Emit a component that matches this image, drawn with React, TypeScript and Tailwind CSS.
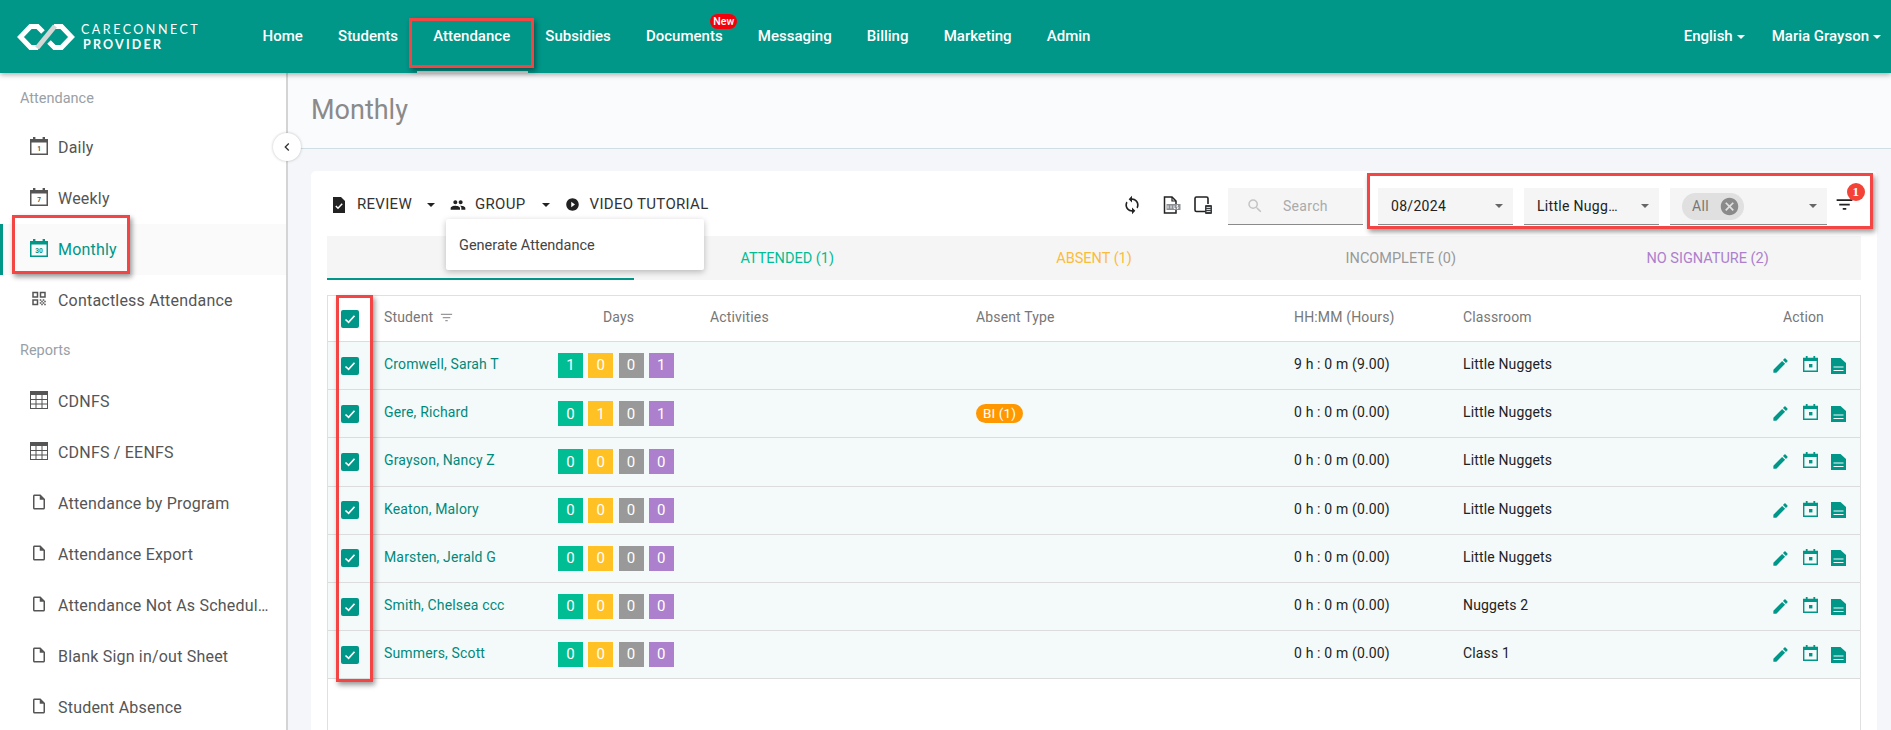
import React from 'react';
import {
    MdEdit, MdFilterList, MdCancel, MdPeople, MdPlayCircleFilled, MdSync, MdSearch,
    MdQrCode, MdOutlineInsertDriveFile, MdChevronLeft,
} from 'react-icons/md';

const roboto = "font-['Roboto',sans-serif]";

const navItems = ['Home', 'Students', 'Attendance', 'Subsidies', 'Documents', 'Messaging', 'Billing', 'Marketing', 'Admin'];

const students = [
    { name: 'Cromwell, Sarah T', days: [1, 0, 0, 1], hours: '9 h : 0 m (9.00)', room: 'Little Nuggets' },
    { name: 'Gere, Richard', days: [0, 1, 0, 1], hours: '0 h : 0 m (0.00)', room: 'Little Nuggets', absent: 'BI (1)' },
    { name: 'Grayson, Nancy Z', days: [0, 0, 0, 0], hours: '0 h : 0 m (0.00)', room: 'Little Nuggets' },
    { name: 'Keaton, Malory', days: [0, 0, 0, 0], hours: '0 h : 0 m (0.00)', room: 'Little Nuggets' },
    { name: 'Marsten, Jerald G', days: [0, 0, 0, 0], hours: '0 h : 0 m (0.00)', room: 'Little Nuggets' },
    { name: 'Smith, Chelsea ccc', days: [0, 0, 0, 0], hours: '0 h : 0 m (0.00)', room: 'Nuggets 2' },
    { name: 'Summers, Scott', days: [0, 0, 0, 0], hours: '0 h : 0 m (0.00)', room: 'Class 1' },
];

const dayColors = ['bg-[#00bd94]', 'bg-[#ffc124]', 'bg-[#999999]', 'bg-[#ac80cc]'];

const tabs = [
    { label: '', color: '' },
    { label: 'ATTENDED (1)', color: 'text-[#00bd94]' },
    { label: 'ABSENT (1)', color: 'text-[#fbbc3a]' },
    { label: 'INCOMPLETE (0)', color: 'text-[#999999]' },
    { label: 'NO SIGNATURE (2)', color: 'text-[#ac80cc]' },
];

const Logo = () => (
    <svg width="58" height="26" viewBox="0 0 58 26" fill="none">
        <path d="M26 8 L20.5 2.5 H13.5 L3.5 13 L13.5 23.5 H21" stroke="#ffffff" strokeWidth="5" />
        <path d="M32 18 L37.5 23.5 H44.5 L54.5 13 L44.5 2.5 H37" stroke="#ffffff" strokeWidth="5" />
        <path d="M20 24 L38 2" stroke="#d3d8d6" strokeWidth="5" />
    </svg>
);

const CalendarIcon: React.FC<{ label: string; active?: boolean }> = ({ label, active }) => {
    const color = active ? '#009688' : '#555555';
    return (
        <svg width="18" height="18" viewBox="0 0 18 18">
            <rect x="0.75" y="2.75" width="16.5" height="14.5" fill="none" stroke={color} strokeWidth="1.5" />
            <rect x="0" y="2" width="18" height="3.5" fill={color} />
            <rect x="3" y="0" width="2.4" height="3" fill={color} />
            <rect x="12.6" y="0" width="2.4" height="3" fill={color} />
            <text x="9" y="14" textAnchor="middle" fontSize="6.5" fontWeight="700" fontFamily="Roboto, sans-serif" fill={color}>{label}</text>
        </svg>
    );
};

const TableIcon = () => (
    <svg width="18" height="18" viewBox="0 0 18 18" fill="none" stroke="#555555" strokeWidth="1">
        <rect x="0.5" y="0.5" width="17" height="17" />
        <rect x="0" y="0" width="18" height="4" fill="#555555" stroke="none" />
        <path d="M0 8.5H18M0 13H18M6 4V18M12 4V18" />
    </svg>
);

const ReviewIcon = () => (
    <svg width="12" height="16" viewBox="0 0 12 16">
        <path d="M0 0H8L12 4V16H0Z" fill="#222222" />
        <path d="M2.8 9 L5 11.2 L9.2 6.8" fill="none" stroke="#ffffff" strokeWidth="1.5" />
    </svg>
);

const XlsIcon = () => (
    <svg width="18" height="18" viewBox="0 0 18 18" fill="none">
        <path d="M1.5 1H9L13 5V17H1.5Z" stroke="#222222" strokeWidth="1.5" />
        <path d="M9 1V5H13" stroke="#222222" strokeWidth="1.2" />
        <rect x="3.5" y="8" width="14" height="6" fill="#8b8f94" />
        <path d="M5 9.5V12.5M8 9.5V12.5M11 9.5V12.5H12.5M15 9.5H14V11H15V12.5H14" stroke="#ffffff" strokeWidth="0.9" />
    </svg>
);

const TabletIcon = () => (
    <svg width="18" height="18" viewBox="0 0 18 18" fill="none">
        <path d="M11 15.5H2.5C1.7 15.5 1 14.8 1 14V2.5C1 1.7 1.7 1 2.5 1H12.5C13.3 1 14 1.7 14 2.5V8" stroke="#222222" strokeWidth="1.6" />
        <rect x="11" y="9" width="7" height="9" rx="1" fill="#3a3d40" />
        <path d="M12.5 11.5H16.5M12.5 13.5H16.5M12.5 15.5H16.5" stroke="#ffffff" strokeWidth="0.8" />
    </svg>
);

const EventIcon = () => (
    <svg width="15" height="16" viewBox="0 0 15 16" className="mb-[3px]">
        <path d="M0.7 2.5H14.3V15.3H0.7Z" fill="none" stroke="#009688" strokeWidth="1.4" />
        <rect x="0" y="2" width="15" height="3" fill="#009688" />
        <rect x="2.8" y="0" width="1.8" height="3" fill="#009688" />
        <rect x="10.4" y="0" width="1.8" height="3" fill="#009688" />
        <rect x="6" y="8" width="3.4" height="3.4" fill="#009688" />
    </svg>
);

const SheetIcon = () => (
    <svg width="15" height="16" viewBox="0 0 15 16">
        <path d="M0 0H9.5L15 5V16H0Z" fill="#009688" />
        <path d="M2.5 9H12.5M2.5 12.5H12.5" stroke="#f4fafa" strokeWidth="1.2" />
    </svg>
);

const Checkbox = () => (
    <span className="w-[18px] h-[18px] rounded-[2px] bg-[#009688] flex items-center justify-center">
        <svg width="12" height="12" viewBox="0 0 12 12" fill="none">
            <path d="M1.5 6.5 L4.6 9.4 L10.5 2.8" stroke="#ffffff" strokeWidth="1.7" />
        </svg>
    </span>
);

const Caret = ({ className = '' }: { className?: string }) => (
    <span className={`w-0 h-0 border-x-[4px] border-x-transparent border-t-[4px] ${className}`} />
);

const SelectBox: React.FC<{ width: string; children: React.ReactNode }> = ({ width, children }) => (
    <div className={`${width} h-[37px] bg-[#f5f5f5] border-b border-[#8a8a8a] flex items-center justify-between pl-[13px] pr-[10px] text-[14px] text-[#222222]`}>
        {children}
        <Caret className="border-t-[#666666]" />
    </div>
);

const SideItem: React.FC<{ icon: React.ReactNode; label: string; active?: boolean }> = ({ icon, label, active }) => (
    <div className={`h-[51px] flex items-center pl-[30px] text-[16px] relative ${active ? 'bg-[#fafafa] text-[#009688]' : 'text-[#555555]'}`}>
        {active && <span className="absolute left-0 top-0 bottom-0 w-[3px] bg-[#009688]" />}
        <span className="w-[18px] flex justify-center mr-[10px] mb-[4px]">{icon}</span>
        <span className="truncate pr-[17px] tracking-[0.2px]">{label}</span>
    </div>
);

const DocIcon = () => <MdOutlineInsertDriveFile size={18} className="text-[#555555]" />;

const RedBox = ({ className }: { className: string }) => (
    <div className={`absolute border-[3px] border-[#f44545] shadow-[2px_3px_5px_rgba(0,0,0,0.4)] pointer-events-none z-30 ${className}`} />
);

export default function App() {
    return (
        <div className={`relative h-[730px] overflow-hidden flex flex-col bg-[#f5f6fa] ${roboto}`}>
            <header className="h-[73px] shrink-0 bg-[#009688] flex items-center text-white shadow-[0_2px_5px_rgba(0,0,0,0.3)] relative z-20">
                <div className="w-[245px] pl-[17px] flex items-center gap-[6px] shrink-0">
                    <Logo />
                    <div className="font-['Lato',sans-serif] text-[12.5px] leading-[15px]">
                        <div className="tracking-[2.5px]">CARECONNECT</div>
                        <div className="tracking-[2.2px] font-bold pl-[2px]">PROVIDER</div>
                    </div>
                </div>
                <nav className="flex items-center h-full">
                    {navItems.map(item => (
                        <div key={item} className="relative h-full flex items-center px-[17.6px] text-[15px] font-medium">
                            {item}
                            {item === 'Documents' && (
                                <span className="absolute top-[14px] right-[3px] h-[15px] px-[3px] rounded-full bg-[#f5000a] text-[10.5px] leading-[15px]">New</span>
                            )}
                            {item === 'Attendance' && <span className="absolute left-[1px] right-0 bottom-0 h-[2px] bg-[#d0d0d0]" />}
                        </div>
                    ))}
                </nav>
                <div className="ml-auto flex items-center gap-[27px] pr-[10px] text-[15px] font-medium">
                    <span className="flex items-center gap-[4px]">English <Caret className="border-t-white" /></span>
                    <span className="flex items-center gap-[4px]">Maria Grayson <Caret className="border-t-white" /></span>
                </div>
            </header>

            <div className="flex flex-1 min-h-0">
                <aside className="w-[288px] shrink-0 bg-white border-r-2 border-[#d4d4d4] relative">
                    <div className="h-[49px] flex items-center pl-[20px] pt-[2px] text-[14.5px] text-[#99a0a6]">Attendance</div>
                    <SideItem icon={<CalendarIcon label="1" />} label="Daily" />
                    <SideItem icon={<CalendarIcon label="7" />} label="Weekly" />
                    <SideItem icon={<CalendarIcon label="30" active />} label="Monthly" active />
                    <SideItem icon={<MdQrCode size={21} className="text-[#555555]" />} label="Contactless Attendance" />
                    <div className="h-[50px] flex items-center pl-[20px] text-[14.5px] text-[#99a0a6]">Reports</div>
                    <SideItem icon={<TableIcon />} label="CDNFS" />
                    <SideItem icon={<TableIcon />} label="CDNFS / EENFS" />
                    <SideItem icon={<DocIcon />} label="Attendance by Program" />
                    <SideItem icon={<DocIcon />} label="Attendance Export" />
                    <SideItem icon={<DocIcon />} label="Attendance Not As Scheduled" />
                    <SideItem icon={<DocIcon />} label="Blank Sign in/out Sheet" />
                    <SideItem icon={<DocIcon />} label="Student Absence" />
                    <button className="absolute top-[60px] -right-[15px] z-10 w-[28px] h-[28px] rounded-full bg-white shadow-[0_0_3px_rgba(0,0,0,0.25)] flex items-center justify-center text-[#333333]">
                        <MdChevronLeft size={16} />
                    </button>
                </aside>

                <main className="flex-1 min-w-0 flex flex-col">
                    <div className="h-[76px] shrink-0 bg-[#fafbfd] border-b border-[#cfdde5] flex items-center pl-[23px] text-[27px] text-[#8a8a8a]">Monthly</div>
                    <div className="flex-1 min-h-0 pl-[23px] pr-[14px] pt-[22px]">
                        <div className="h-full bg-white rounded-t-[5px] px-[16px]">
                            <div className="h-[65px] pt-[2px] flex items-center text-[15px] text-[#333333] tracking-[0.3px] relative">
                                <span className="ml-[6px] mr-[12px]"><ReviewIcon /></span>
                                <span>REVIEW</span>
                                <Caret className="border-t-[#222222] ml-[15px]" />
                                <MdPeople size={16} className="text-[#222222] ml-[15px] mr-[9px]" />
                                <span>GROUP</span>
                                <Caret className="border-t-[#222222] ml-[16px]" />
                                <MdPlayCircleFilled size={15} className="text-[#222222] ml-[15px] mr-[10px]" />
                                <span>VIDEO TUTORIAL</span>

                                <div className="ml-auto flex items-center pt-[4px]">
                                    <MdSync size={20} className="text-[#222222] mr-[21px] mb-[3px]" />
                                    <span className="mr-[13px] mb-[3px]"><XlsIcon /></span>
                                    <span className="mr-[16px] mb-[3px]"><TabletIcon /></span>
                                    <div className="w-[135px] h-[37px] bg-[#f5f5f5] border-b border-[#8a8a8a] flex items-center pl-[18px] text-[14px] text-[#aaaaaa]">
                                        <MdSearch size={18} className="text-[#c4c4c4] mr-[19px]" />Search
                                    </div>
                                    <div className="flex items-center gap-[11px] ml-[15px]">
                                        <SelectBox width="w-[135px]">08/2024</SelectBox>
                                        <SelectBox width="w-[135px]"><span>Little Nugg…</span></SelectBox>
                                        <SelectBox width="w-[157px]">
                                            <span className="h-[27px] w-[62px] rounded-full bg-[#e0e0e0] flex items-center pl-[10px] -ml-[1px] gap-[10px] text-[#777777]">
                                                All <MdCancel size={21} className="text-[#8a8a8a]" />
                                            </span>
                                        </SelectBox>
                                    </div>
                                    <div className="relative w-[34px] h-[37px] flex items-center justify-end pr-[6px] shrink-0">
                                        <MdFilterList size={21} className="text-[#222222] mb-[4px]" />
                                        <span className="absolute -top-[5px] right-[-4px] w-[18px] h-[18px] rounded-full bg-[#f44336] text-white text-[13px] font-bold leading-[18px] text-center font-['Liberation_Serif',serif]">1</span>
                                    </div>
                                </div>
                            </div>

                            <div className="relative h-[44px] bg-[#f5f5f5] grid grid-cols-5 text-[14.5px]">
                                {tabs.map((tab, i) => (
                                    <div key={i} className={`flex items-center justify-center pt-[2px] ${tab.color} ${i === 0 ? 'border-b-2 border-[#009688]' : ''}`}>{tab.label}</div>
                                ))}
                                <div className="absolute left-[119px] top-[-17px] w-[258px] h-[51px] bg-white rounded-[2px] shadow-[0_2px_6px_rgba(0,0,0,0.25)] flex items-center pl-[13px] pt-[2px] text-[14.5px] text-[#444444]">Generate Attendance</div>
                            </div>

                            <div className="mt-[15px] h-[500px] border border-[#e0e0e0] text-[14px] tracking-[0.15px]">
                                <div className="grid grid-cols-[56px_174px_152px_266px_318px_169px_200px_1fr] h-[46px] items-center text-[#777777] border-b border-[#dcdcdc]">
                                    <div className="pl-[13px]"><Checkbox /></div>
                                    <div className="flex items-center gap-[6px] pb-[2px]">Student <MdFilterList size={15} className="text-[#999999]" /></div>
                                    <div className="w-[121px] text-center pb-[2px]">Days</div>
                                    <div className="pb-[2px]">Activities</div>
                                    <div className="pb-[2px]">Absent Type</div>
                                    <div className="pb-[2px]">HH:MM (Hours)</div>
                                    <div className="pb-[2px]">Classroom</div>
                                    <div className="text-right pr-[36px] pb-[2px]">Action</div>
                                </div>
                                {students.map(s => (
                                    <div key={s.name} className="grid grid-cols-[56px_174px_152px_266px_318px_169px_200px_1fr] h-[48.2px] items-center bg-[#f4fafa] border-b border-[#dcdcdc] text-[#222222]">
                                        <div className="pl-[13px]"><Checkbox /></div>
                                        <div className="text-[#00897b] pb-[2px]">{s.name}</div>
                                        <div className="flex gap-[5.3px]">
                                            {s.days.map((d, i) => (
                                                <span key={i} className={`w-[25px] h-[25px] flex items-center justify-center text-white text-[15px] ${dayColors[i]}`}>{d}</span>
                                            ))}
                                        </div>
                                        <div />
                                        <div>
                                            {s.absent && <span className="inline-flex items-center h-[19px] w-[47px] justify-center rounded-full bg-[#ff9800] text-white text-[13.5px]">{s.absent}</span>}
                                        </div>
                                        <div className="pb-[2px]">{s.hours}</div>
                                        <div className="pb-[2px]">{s.room}</div>
                                        <div className="flex justify-end items-center gap-[13px] pr-[14px]">
                                            <MdEdit size={19} className="text-[#009688]" />
                                            <EventIcon />
                                            <SheetIcon />
                                        </div>
                                    </div>
                                ))}
                            </div>
                        </div>
                    </div>
                </main>
            </div>

            <RedBox className="left-[409px] top-[18px] w-[125px] h-[50px]" />
            <RedBox className="left-[12px] top-[215px] w-[118px] h-[59px]" />
            <RedBox className="left-[1367px] top-[173px] w-[506px] h-[56px]" />
            <RedBox className="left-[336px] top-[295px] w-[37px] h-[387px]" />
        </div>
    );
}
